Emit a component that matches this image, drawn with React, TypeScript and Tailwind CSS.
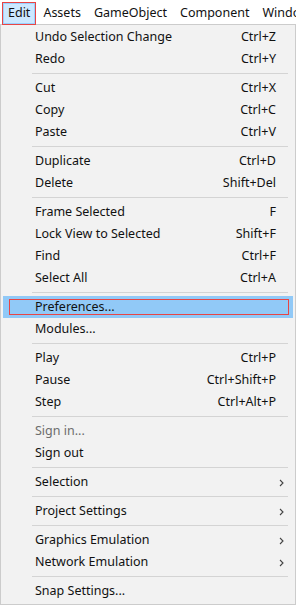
import React from "react";

type Item =
  | { sep: true }
  | { label: string; sc?: string; arrow?: boolean; disabled?: boolean; active?: boolean };

const items: Item[] = [
  { label: "Undo Selection Change", sc: "Ctrl+Z" },
  { label: "Redo", sc: "Ctrl+Y" },
  { sep: true },
  { label: "Cut", sc: "Ctrl+X" },
  { label: "Copy", sc: "Ctrl+C" },
  { label: "Paste", sc: "Ctrl+V" },
  { sep: true },
  { label: "Duplicate", sc: "Ctrl+D" },
  { label: "Delete", sc: "Shift+Del" },
  { sep: true },
  { label: "Frame Selected", sc: "F" },
  { label: "Lock View to Selected", sc: "Shift+F" },
  { label: "Find", sc: "Ctrl+F" },
  { label: "Select All", sc: "Ctrl+A" },
  { sep: true },
  { label: "Preferences...", active: true },
  { label: "Modules..." },
  { sep: true },
  { label: "Play", sc: "Ctrl+P" },
  { label: "Pause", sc: "Ctrl+Shift+P" },
  { label: "Step", sc: "Ctrl+Alt+P" },
  { sep: true },
  { label: "Sign in...", disabled: true },
  { label: "Sign out" },
  { sep: true },
  { label: "Selection", arrow: true },
  { sep: true },
  { label: "Project Settings", arrow: true },
  { sep: true },
  { label: "Graphics Emulation", arrow: true },
  { label: "Network Emulation", arrow: true },
  { sep: true },
  { label: "Snap Settings..." },
];

function Chevron() {
  return (
    <svg width="5" height="8" viewBox="0 0 5 8" className="block">
      <path d="M1 1 L4 4 L1 7" fill="none" stroke="#444" strokeWidth="1.1" />
    </svg>
  );
}

export default function App() {
  return (
    <div
      className="w-[296px] h-[605px] bg-white text-[12.5px] text-[#111] overflow-hidden"
      style={{ fontFamily: '"Noto Sans", "Open Sans", sans-serif' }}
    >
      <div className="h-[24px] pt-[2px] flex items-center">
        <div className="relative ml-[3px] h-[21px] px-[4px] flex items-center bg-[#cce8ff] border border-[#99d1ff]">
          <span>Edit</span>
          <div className="absolute -left-[2px] -top-[2px] -right-[2px] -bottom-[2px] border-[1.5px] border-[#e84545]" />
        </div>
        <div className="ml-[8px] flex gap-[13px] whitespace-nowrap">
          <span>Assets</span>
          <span>GameObject</span>
          <span>Component</span>
          <span>Windo</span>
        </div>
      </div>
      <div className="h-[581px] w-[296px] bg-[#f2f2f2] border border-[#cccccc] pl-[2px] pr-[2px] pt-[1px]">
        {items.map((it, i) =>
          "sep" in it ? (
            <div key={i} className="h-[7px] flex items-center pl-[29px] pr-[5px]">
              <div className="h-px w-full bg-[#d4d4d4]" />
            </div>
          ) : (
            <div
              key={i}
              className={
                "relative h-[22px] flex items-center pl-[32px] pr-[17px] " +
                (it.active ? "bg-[#91c9f7]" : "")
              }
            >
              <span className={it.disabled ? "text-[#6d6d6d]" : ""}>{it.label}</span>
              <span className="ml-auto">{it.sc}</span>
              {it.arrow && (
                <span className="absolute right-[9px] top-[8px]">
                  <Chevron />
                </span>
              )}
              {it.active && (
                <div className="absolute left-[6px] right-[4px] top-[3px] bottom-[3px] border-[1.5px] border-[#e84545]" />
              )}
            </div>
          )
        )}
      </div>
    </div>
  );
}
